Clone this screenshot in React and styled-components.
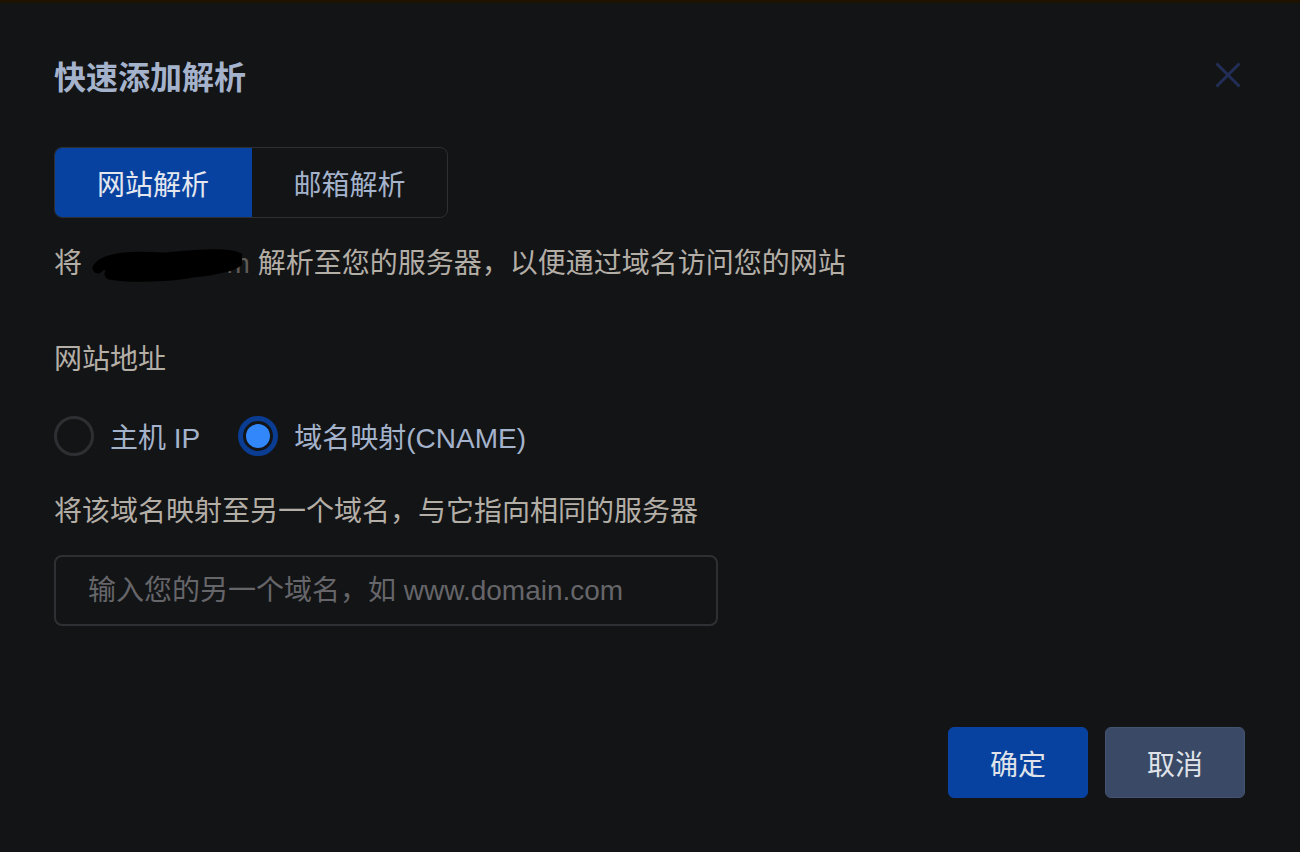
import React, { useState } from 'react'
import styled, { createGlobalStyle } from 'styled-components'

const GlobalStyle = createGlobalStyle`
html, body {
  margin: 0;
  padding: 0;
  background: #131416;
}
body {
  font-family: 'Liberation Sans', 'Noto Sans CJK SC', sans-serif;
}
* { box-sizing: border-box; }
`

const Page = styled.div`
width: 1300px;
height: 852px;
overflow: hidden;
background: #131416;
border-top: 3px solid #1e1200;
`

const Dialog = styled.div`
padding: 52px 55px 0 54px;
display: flex;
flex-direction: column;
`

const Header = styled.div`
height: 40px;
display: flex;
align-items: center;
justify-content: space-between;
`

const Title = styled.h2`
margin: 0;
font-size: 32px;
font-weight: 700;
color: #a4b3cb;
`

const CloseButton = styled.button`
border: none;
background: transparent;
padding: 0;
margin-right: 4px;
width: 26px;
height: 26px;
display: flex;
align-items: center;
justify-content: center;
cursor: pointer;
`

const Tabs = styled.div`
margin-top: 52px;
display: flex;
width: 394px;
height: 71px;
border: 1px solid #2e2f33;
border-radius: 8px;
overflow: hidden;
`

const Tab = styled.button`
flex: ${p => (p.$first ? '0 0 198px' : '1 1 auto')};
border: none;
margin: ${p => (p.$active ? '-1px 0 -1px -1px' : '0')};
background: ${p => (p.$active ? '#0842a1' : 'transparent')};
color: ${p => (p.$active ? '#e4e7ee' : '#a4b3cb')};
font-family: inherit;
font-size: 28px;
cursor: pointer;
`

const Text = styled.p`
margin: ${p => p.$mt || 0}px 0 0;
font-size: 28px;
line-height: 40px;
color: #b3aea6;
`

const Redacted = styled.span`
position: relative;
display: inline-block;
width: 168px;
height: 40px;
vertical-align: top;
color: #5f5b56;
text-align: right;
padding-right: 8px;
`

const Scribble = styled.svg`
position: absolute;
left: 2px;
top: 0;
`

const RadioRow = styled.div`
margin-top: 36px;
display: flex;
align-items: center;
gap: 38px;
height: 40px;
`

const RadioLabel = styled.label`
display: flex;
align-items: center;
gap: 16px;
font-size: 28px;
color: #a4b3cb;
cursor: pointer;
`

const RadioCircle = styled.span`
width: 40px;
height: 40px;
border-radius: 50%;
border: ${p => (p.$checked ? '5px solid #0a3c91' : '3px solid #2e2f33')};
display: flex;
align-items: center;
justify-content: center;

&::after {
  content: '';
  display: ${p => (p.$checked ? 'block' : 'none')};
  width: 24px;
  height: 24px;
  border-radius: 50%;
  background: #3287fb;
}
`

const Input = styled.input`
margin-top: 23px;
width: 664px;
height: 71px;
border: 2px solid #2f3033;
border-radius: 8px;
background: transparent;
padding: 0 32px;
font-family: inherit;
font-size: 28px;
color: #c8c8c8;
outline: none;

&::placeholder {
  color: #66666a;
}
`

const Footer = styled.div`
margin-top: 101px;
display: flex;
justify-content: flex-end;
gap: 17px;
`

const Button = styled.button`
width: 140px;
height: 71px;
border-radius: 6px;
border: 1px solid ${p => (p.$primary ? '#0a43a3' : '#44536f')};
background: ${p => (p.$primary ? '#0842a0' : '#3a4965')};
color: #dfe2e8;
font-family: inherit;
font-size: 28px;
cursor: pointer;
`

const App = () => {
  const [tab, setTab] = useState('web')
  const [mode, setMode] = useState('cname')

  return (
    <Page>
      <GlobalStyle />
      <Dialog>
        <Header>
          <Title>快速添加解析</Title>
          <CloseButton aria-label="close">
            <svg width="26" height="26" viewBox="0 0 26 26">
              <path d="M1.5 1.5 L24.5 24.5 M24.5 1.5 L1.5 24.5" stroke="#222e56" strokeWidth="3" />
            </svg>
          </CloseButton>
        </Header>

        <Tabs>
          <Tab $first $active={tab === 'web'} onClick={() => setTab('web')}>网站解析</Tab>
          <Tab $active={tab === 'mail'} onClick={() => setTab('mail')}>邮箱解析</Tab>
        </Tabs>

        <Text $mt={26}>
          将 <Redacted>
            com
            <Scribble width="150" height="40" viewBox="0 0 150 40">
              <path
                d="M6 24 C12 14 40 12 70 14 C100 12 135 8 146 14 C150 20 125 26 100 28 C80 32 40 34 18 30 M10 20 C40 28 90 22 140 18"
                stroke="#000" strokeWidth="11" fill="none" strokeLinecap="round"
              />
              <path d="M30 24 C60 18 100 18 130 14" stroke="#000" strokeWidth="9" fill="none" strokeLinecap="round" />
            </Scribble>
          </Redacted>解析至您的服务器，以便通过域名访问您的网站
        </Text>

        <Text $mt={56}>网站地址</Text>

        <RadioRow>
          <RadioLabel onClick={() => setMode('ip')}>
            <RadioCircle $checked={mode === 'ip'} />
            主机 IP
          </RadioLabel>
          <RadioLabel onClick={() => setMode('cname')}>
            <RadioCircle $checked={mode === 'cname'} />
            域名映射(CNAME)
          </RadioLabel>
        </RadioRow>

        <Text $mt={36}>将该域名映射至另一个域名，与它指向相同的服务器</Text>

        <Input placeholder="输入您的另一个域名，如 www.domain.com" />

        <Footer>
          <Button $primary>确定</Button>
          <Button>取消</Button>
        </Footer>
      </Dialog>
    </Page>
  )
}

export default App
